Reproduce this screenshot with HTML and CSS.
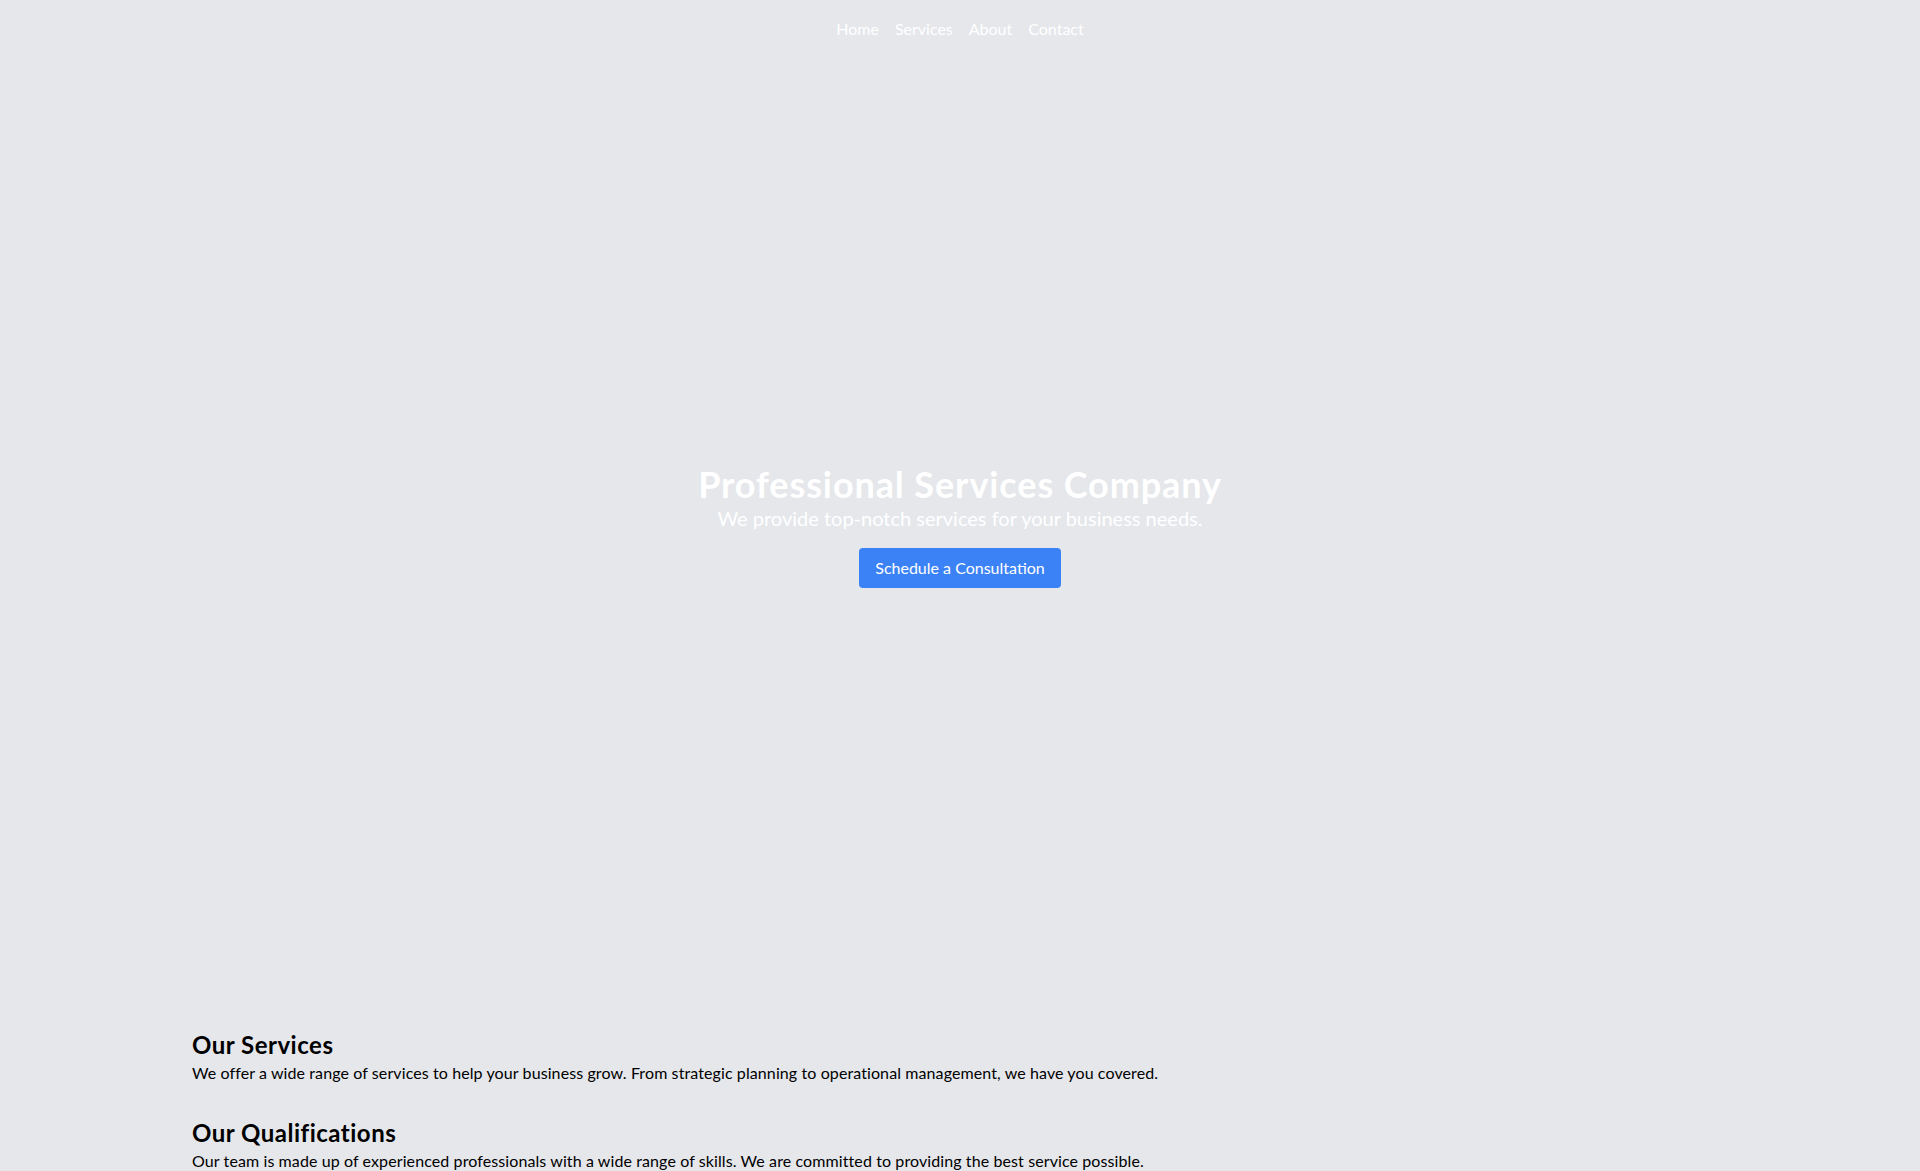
FILE: index.html
```html
<!DOCTYPE html>
<html lang="en">
<head>
<meta charset="utf-8">
<title>Professional Services Company</title>
<link rel="stylesheet" href="styles.css">
</head>
<body>
<nav class="nav">
  <a class="nav-link" href="#">Home</a>
  <a class="nav-link" href="#">Services</a>
  <a class="nav-link" href="#">About</a>
  <a class="nav-link" href="#">Contact</a>
</nav>
<header class="hero">
  <h1 class="hero-title">Professional Services Company</h1>
  <p class="hero-sub">We provide top-notch services for your business needs.</p>
  <a class="hero-btn" href="#">Schedule a Consultation</a>
</header>
<main class="container">
  <section class="section">
    <h2 class="section-title">Our Services</h2>
    <p class="section-text">We offer a wide range of services to help your business grow. From strategic planning to operational management, we have you covered.</p>
  </section>
  <section class="section">
    <h2 class="section-title">Our Qualifications</h2>
    <p class="section-text">Our team is made up of experienced professionals with a wide range of skills. We are committed to providing the best service possible.</p>
  </section>
</main>
</body>
</html>
```
FILE: styles.css
```css
* { box-sizing: border-box; }
html, body {
  margin: 0;
  padding: 0;
}
body {
  background: #e5e7eb;
  color: #000;
  font-family: "Segoe UI", Lato, "Noto Sans", sans-serif;
  font-size: 16px;
  line-height: 24px;
}
.nav {
  display: flex;
  justify-content: center;
  gap: 16px;
  padding: 17px 16px;
}
.nav-link {
  color: #fff;
  text-decoration: none;
}
.hero {
  height: 80vh;
  display: flex;
  flex-direction: column;
  align-items: center;
  justify-content: center;
  color: #fff;
  text-align: center;
}
.hero-title {
  margin: 0;
  font-size: 36px;
  line-height: 40px;
  font-weight: 700;
  letter-spacing: 0.9px;
}
.hero-sub {
  margin: 0;
  font-size: 20px;
  line-height: 28px;
}
.hero-btn {
  margin-top: 16px;
  background: #3b82f6;
  color: #fff;
  text-decoration: none;
  padding: 8px 16px;
  border-radius: 4px;
}
.container {
  max-width: 1536px;
  margin: 0 auto;
  padding-top: 34px;
  display: flex;
  flex-direction: column;
  gap: 32px;
}
.section-title {
  margin: 0;
  font-size: 24px;
  line-height: 32px;
  font-weight: 700;
  letter-spacing: 0.5px;
}
.section-text {
  margin: 0;
  letter-spacing: 0.1px;
}
```
